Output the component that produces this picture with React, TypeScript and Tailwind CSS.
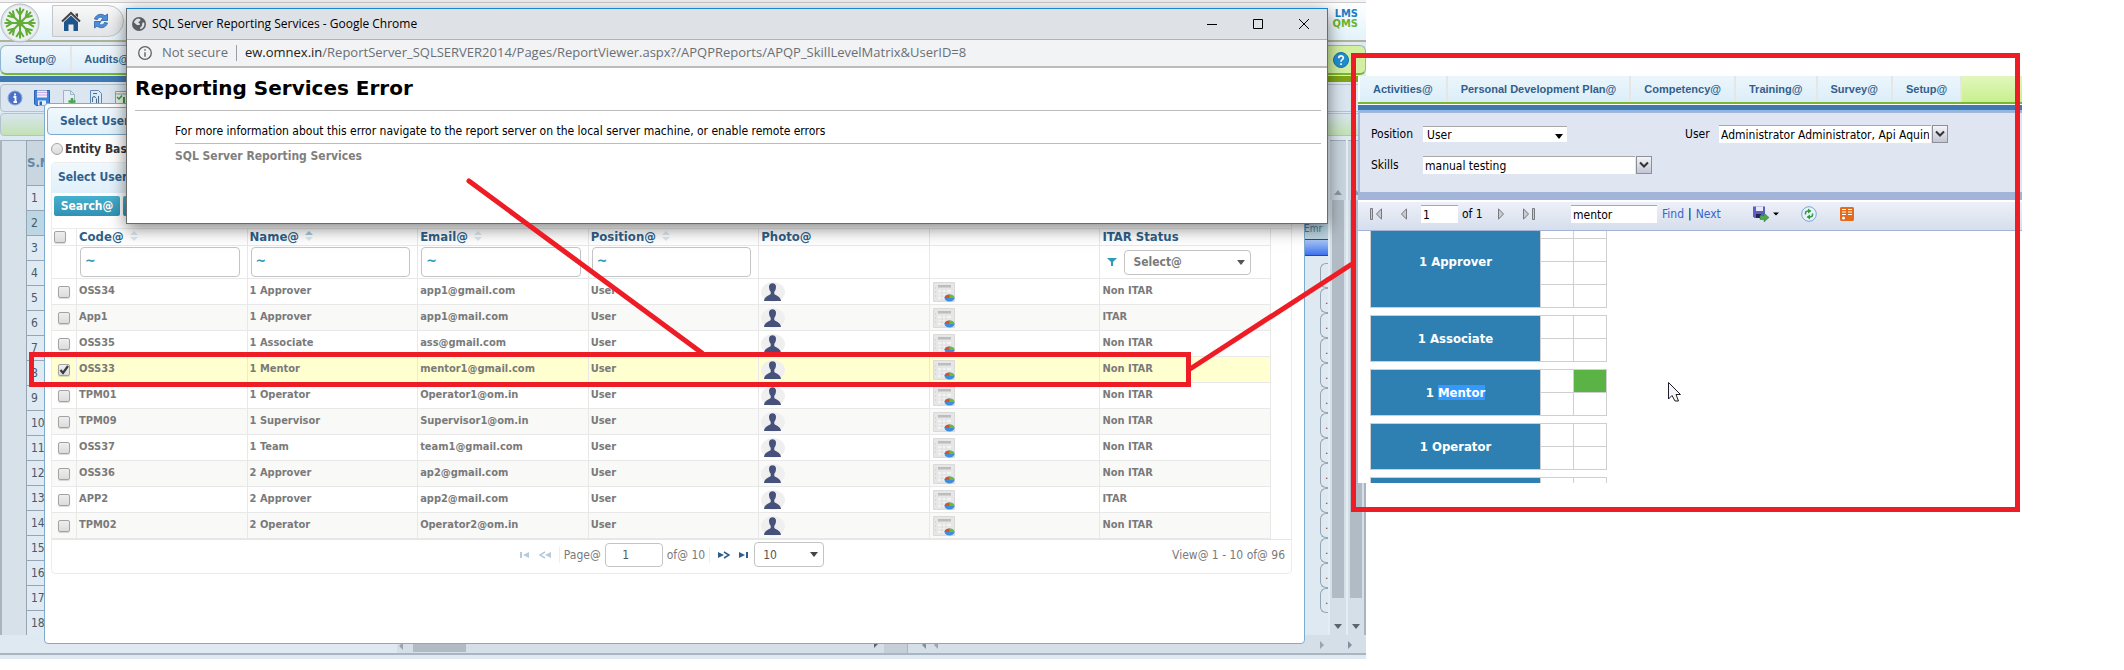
import React from "react";

const users = [
  { code: "OSS34", name: "1 Approver", email: "app1@gmail.com", itar: "Non ITAR" },
  { code: "App1", name: "1 Approver", email: "app1@mail.com", itar: "ITAR" },
  { code: "OSS35", name: "1 Associate", email: "ass@gmail.com", itar: "Non ITAR" },
  { code: "OSS33", name: "1 Mentor", email: "mentor1@gmail.com", itar: "Non ITAR" },
  { code: "TPM01", name: "1 Operator", email: "Operator1@om.in", itar: "Non ITAR" },
  { code: "TPM09", name: "1 Supervisor", email: "Supervisor1@om.in", itar: "Non ITAR" },
  { code: "OSS37", name: "1 Team", email: "team1@gmail.com", itar: "Non ITAR" },
  { code: "OSS36", name: "2 Approver", email: "ap2@gmail.com", itar: "Non ITAR" },
  { code: "APP2", name: "2 Approver", email: "app2@mail.com", itar: "ITAR" },
  { code: "TPM02", name: "2 Operator", email: "Operator2@om.in", itar: "Non ITAR" },
];

const gridRows = Array.from({ length: 18 }, (_, i) => i + 1);
const reportTabs = [
  "Activities@",
  "Personal Development Plan@",
  "Competency@",
  "Training@",
  "Survey@",
  "Setup@",
];

/* ---------- icons ---------- */

function BurstLogo() {
  const spokes = Array.from({ length: 8 }, (_, i) => i * 45);
  return (
    <svg viewBox="0 0 40 40" className="h-10 w-10 shrink-0">
      <circle cx="20" cy="20" r="19" fill="#dfe5e8" stroke="#b4bcc2" />
      <circle cx="20" cy="20" r="17" fill="#eef2f3" />
      <g stroke="#62ad38" strokeWidth="2" fill="none">
        {spokes.map((a) => (
          <path key={a} transform={`rotate(${a} 20 20)`} d="M20 20V4.500M16.200 6L20 12L23.800 6" />
        ))}
      </g>
      <circle cx="20" cy="20" r="3.500" fill="#62ad38" />
    </svg>
  );
}

function HomeIcon() {
  return (
    <svg viewBox="0 0 20 20" className="h-5 w-5">
      <path d="M1 10.500L10 2L19 10.500" fill="none" stroke="#444" strokeWidth="2" />
      <path d="M14.500 2.500h2.500v4l-2.500-2.300z" fill="#444" />
      <path d="M3 11L10 4.500L17 11V20H12.500V13.500H7.500V20H3Z" fill="#1d558c" />
    </svg>
  );
}

function SyncIcon() {
  return (
    <svg viewBox="0 0 16 16" className="h-4 w-4">
      <path d="M1.500 6C3 1 9 0 12 3L14.500 1V7.500H8L10 5C8 3.500 5 4 4.500 6.500Z" fill="#4d8fd8" stroke="#2a5ea8" strokeWidth="0.800" />
      <path d="M14.500 10C13 15 7 16 4 13L1.500 15V8.500H8L6 11C8 12.500 11 12 11.500 9.500Z" fill="#4d8fd8" stroke="#2a5ea8" strokeWidth="0.800" />
    </svg>
  );
}

function InfoIcon() {
  return (
    <svg viewBox="0 0 16 16" className="h-4 w-4">
      <circle cx="8" cy="8" r="7" fill="#4a6fc8" stroke="#8ba5dd" />
      <path d="M8 3.500v2M6.500 7H8.500V12M6.500 12H10" stroke="#fff" strokeWidth="1.800" fill="none" />
    </svg>
  );
}

function DiskIcon() {
  return (
    <svg viewBox="0 0 16 16" className="h-4 w-4">
      <path d="M0.500 0.500H15.500V15.500H2L0.500 14Z" fill="#3f86dc" stroke="#2c62b4" />
      <path d="M3 0.500H13V7.500H3Z" fill="#f3ecfb" />
      <path d="M3 2.500H13M3 5H13" stroke="#c9a9e6" />
      <path d="M4 10.500H12V15.500H4Z" fill="#e8f1fb" />
      <path d="M5.500 11.500H8V15H5.500Z" fill="#2c62b4" />
    </svg>
  );
}

function PageAddIcon() {
  return (
    <svg viewBox="0 0 16 16" className="h-4 w-4">
      <path d="M2.500 0.500H9.500L13.500 4.500V15.500H2.500Z" fill="#e3edf3" stroke="#9db4c4" />
      <path d="M9.500 0.500V4.500H13.500" fill="none" stroke="#9db4c4" />
      <path d="M11 8V15M7.500 11.500H14.500" stroke="#4aa84a" strokeWidth="2.500" />
    </svg>
  );
}

function PageLinkIcon() {
  return (
    <svg viewBox="0 0 16 16" className="h-4 w-4">
      <path d="M2.500 0.500H10.500L13.500 3.500V15.500H2.500Z" fill="#dbe9f5" stroke="#5a8bb8" />
      <path d="M5 3.500H9M4.500 12V8a1.500 1.500 0 0 1 3 0M10.500 6V14M8.500 8.500V14" stroke="#4b6d8e" fill="none" />
    </svg>
  );
}

function SheetCheckIcon() {
  return (
    <svg viewBox="0 0 16 16" className="h-4 w-4">
      <path d="M0.500 1.500H15.500V15.500H0.500Z" fill="#e6efe6" stroke="#8aa39a" />
      <path d="M0.500 4H15.500" stroke="#8aa39a" />
      <path d="M2 7L4 9L7 5.500" stroke="#3a9a3a" fill="none" strokeWidth="1.500" />
      <path d="M9 7V14M12 7V14" stroke="#3a9a3a" strokeWidth="2" />
    </svg>
  );
}

function HelpIcon() {
  return (
    <svg viewBox="0 0 16 16" className="h-4 w-4">
      <circle cx="8" cy="8" r="7.500" fill="#1f8fd0" stroke="#1472ac" />
      <path d="M5.700 6.300C5.700 3 10.400 3.200 10.300 6C10.200 7.800 8 7.600 8 9.700M8 11.300V13" stroke="#fff" strokeWidth="1.700" fill="none" />
    </svg>
  );
}

function GlobeIcon() {
  return (
    <svg viewBox="0 0 14 14" className="h-3.5 w-3.5 shrink-0">
      <circle cx="7" cy="7" r="7" fill="#5a5e63" />
      <path d="M6 1.500C8.500 1.500 9 3 8 4C6.500 4.500 6.500 5 6.500 6C8 6 8.500 7 7.500 8H5L2 5.500C2.500 3.500 4 2 6 1.500ZM11 5L12.500 6.500C12.500 9.500 11 11.500 8.500 12.200C7.500 11 8.500 10 9.500 9.500C10.500 8.500 9.500 6.500 11 5Z" fill="#dee1e6" />
    </svg>
  );
}

function PersonIcon() {
  return (
    <svg viewBox="0 0 24 20" className="block h-5 w-6">
      <ellipse cx="12" cy="10" rx="12" ry="10" fill="#efefef" />
      <path d="M8 4.500C8 0 15 0 15 4.500C15 7.500 14 9 13.300 9.800V12C14.500 13.500 19.500 14 20 19H3C3.500 14 8.500 13.500 9.700 12V9.800C9 9 8 7.500 8 4.500Z" fill="#46527b" />
    </svg>
  );
}

function ReportIcon() {
  return (
    <svg viewBox="0 0 22 20" className="block h-5 w-[22px]">
      <path d="M0.500 0.500H21.500V19.500H0.500Z" fill="#e6e6e6" stroke="#dadada" />
      <path d="M5 3H18V5.500H5Z" fill="#bdbdbd" />
      <path d="M5 8H18V17H5Z" fill="#f3f3f3" />
      <path d="M5 11H18M5 14H18M9 8V17M13 8V17" stroke="#dcdcdc" />
      <path d="M2 6h1M2 10h1M2 14h1" stroke="#c6c6c6" />
      <ellipse cx="16.500" cy="16" rx="5" ry="3.500" fill="#3f8ddb" />
      <path d="M16.500 16L11.500 16A5 3.500 0 0 1 16.500 12.500Z" fill="#d9502a" />
      <path d="M16.500 16V12.500A5 3.500 0 0 1 21.500 16Z" fill="#6cbf2c" />
    </svg>
  );
}

function SortIcon({ active }: { active?: boolean }) {
  return (
    <svg viewBox="0 0 8 10" className="ml-0.5 inline-block h-2.5 w-2 align-baseline">
      <path d="M0 4L4 0L8 4Z" fill={active ? "#a3c6de" : "#dbe8f0"} />
      <path d="M0 6L4 10L8 6Z" fill="#dbe8f0" />
    </svg>
  );
}

function Arrow({ dir, className }: { dir: "up" | "down" | "left" | "right"; className: string }) {
  const d = {
    up: "M0 7L4 2L8 7Z",
    down: "M0 2L4 7L8 2Z",
    left: "M6 0L2 4L6 8Z",
    right: "M2 0L6 4L2 8Z",
  }[dir];
  return (
    <svg viewBox="0 0 8 8" className={"h-2 w-2 " + className}>
      <path d={d} fill="currentColor" />
    </svg>
  );
}

/* step arrows of the report toolbar */
function StepIcon({ back, bar }: { back?: boolean; bar?: boolean }) {
  return (
    <svg viewBox={bar ? "0 0 12 12" : "0 0 6 12"} className={bar ? "h-3 w-3" : "h-3 w-1.5"}>
      <g transform={back ? (bar ? "matrix(-1 0 0 1 12 0)" : "matrix(-1 0 0 1 6 0)") : undefined}>
        <path d="M0.500 0.800L5.500 6L0.500 11.200Z" fill="#c9cbd0" stroke="#77797f" />
        {bar && <path d="M9.500 0.500H11.500V11.500H9.500Z" fill="#c9cbd0" stroke="#77797f" />}
      </g>
    </svg>
  );
}

/* ---------- application behind the dialogs ---------- */

function AppBackground() {
  return (
    <section className="flex h-full flex-col bg-[#dfe9f2]">
      <div className="h-0.5 bg-[#f3f3f3]" />
      <header className="flex h-10 justify-between border-t border-b-2 border-t-[#cccccc] border-b-[#b0b198] bg-gradient-to-b from-white to-[#e3f2fb]">
        <div className="flex">
          <BurstLogo />
          <div className="mt-0.5 ml-3 flex h-8 w-[72px] items-center gap-3 rounded-r-2xl border border-[#c3c7ca] bg-gradient-to-b from-[#f8f8f8] to-[#e2e4e6] pl-2">
            <button aria-label="Home">
              <HomeIcon />
            </button>
            <button aria-label="Refresh">
              <SyncIcon />
            </button>
          </div>
        </div>
        <div className="pt-1.5 pr-2 text-right text-[11px] leading-[10px] font-bold">
          <p className="text-[#1b7ec2]">LMS</p>
          <p className="text-[#6ab42d]">QMS</p>
        </div>
      </header>

      <nav className="mt-[3px] flex h-[30px] justify-between rounded-md border border-b-2 border-[#8fb5d5] border-b-[#76b833] bg-[#d3f0a0] font-['Liberation_Sans',sans-serif] text-[11px] font-bold text-[#335f8c]">
        <div className="flex">
          <a href="#setup" className="flex items-center rounded-l-md border-r-2 border-[#e6e6e6] bg-gradient-to-b from-[#f0f8fd] to-[#dcedf8] px-3.5">
            Setup@
          </a>
          <a href="#audits" className="flex items-center bg-gradient-to-b from-[#f0f8fd] to-[#dcedf8] px-3">
            Audits@
          </a>
        </div>
        <button aria-label="Help" className="mr-4">
          <HelpIcon />
        </button>
      </nav>
      <div className="mt-px flex h-1.5">
        <div className="flex-1 bg-[#4079b0]" />
        <div className="w-20 bg-[#7fa616]" />
      </div>

      <div className="mt-0.5 flex h-7 items-center gap-[11px] rounded border border-[#b4c2d0] bg-[#dbe6f0] pl-1.5">
        <InfoIcon />
        <DiskIcon />
        <PageAddIcon />
        <PageLinkIcon />
        <SheetCheckIcon />
      </div>
      <div className="mt-px h-[23px] rounded border border-[#b4c2d0] bg-gradient-to-b from-[#d8e5ee] to-[#c3e2b4]" />

      <div className="mt-1 flex border-x-2 border-[#aab4c0]">
        <div className="w-6 border-t border-[#a3b1bf] bg-[#d6e1e9]" />
        <div className="w-5 border-t border-l border-[#96a5b3] bg-[#dfeaf3] text-xs text-[#4a5a68]">
          <div className="flex h-11 items-center bg-[#c9d5df] text-[13px] font-bold text-[#6189aa]">S.No</div>
          {gridRows.map((n) => (
            <div
              key={n}
              className={
                "flex h-[25px] items-center border-t border-[#96a5b3] " +
                (n === 2 ? "bg-[#bdd6e3] " : "") +
                "pl-1"
              }
            >
              {n}
            </div>
          ))}
        </div>
        <div className="flex-1" />

        {/* cells left visible between the dialog and the scrollbars */}
        <div className="w-6 border-t border-[#a3b1bf]">
          <div className="h-[78px] bg-[#c9d8e4]" />
          <p className="h-5 bg-[#bdd5e2] text-[10px] leading-5 whitespace-nowrap text-[#527b9c]">Emr</p>
          <div className="h-[17px] border-y border-[#1f3fe0] bg-gradient-to-b from-[#a9c6f5] to-[#3f70ec]" />
          <div className="h-[7px]" />
          {gridRows.slice(4).map((n) => (
            <div key={n} className="ml-4 flex h-[25px] items-center justify-end rounded-l-md border border-r-0 border-[#96a5b3] text-[10px] text-[#333]">
              .
            </div>
          ))}
        </div>
        {[0, 1].map((n) => (
          <div key={n} className="flex w-[18px] flex-col border-l-2 border-[#e4edf4] bg-[#d4dfe8]">
            <div className="flex h-[60px] items-end justify-center border-t border-[#a3b1bf] bg-[#c9d5df] pb-1">
              <Arrow dir="up" className="text-[#8b97a3]" />
            </div>
            <div className="mx-0.5 h-[398px] bg-[#b0bbc5]" />
            <Arrow dir="down" className="mt-6 self-center text-[#5a6571]" />
          </div>
        ))}
      </div>

      <div className="flex flex-1 items-center border-b-2 border-[#a9b5c0] bg-[#dfe9f2]">
        <div className="w-[397px]" />
        <div className="flex h-full flex-1 items-center bg-[#d5dfe8]">
          <Arrow dir="left" className="mt-1 text-[#9aa5b0]" />
          <div className="ml-2 h-4 w-[53px] bg-[#b2bbc4]" />
          <Arrow dir="right" className="mr-1 ml-auto text-[#5a6571]" />
        </div>
        <div className="h-full w-6 border-r border-[#a9b5c0] bg-[#c5cfd9]" />
        <div className="flex h-full w-[458px] items-center bg-[#d5dfe8] pt-0.5 pr-3 pl-3">
          <Arrow dir="left" className="text-[#8090a6]" />
          <Arrow dir="left" className="ml-1 text-[#9aa5b0]" />
          <Arrow dir="right" className="mr-5 ml-auto text-[#9aa5b0]" />
          <Arrow dir="right" className="text-[#8090a6]" />
        </div>
      </div>
      <div className="h-1 bg-[#dfe9f2]" />
    </section>
  );
}

/* ---------- user picker ---------- */

function Tick({ label, checked }: { label: string; checked?: boolean }) {
  return (
    <span className="relative block h-3 w-3">
      <input
        type="checkbox"
        aria-label={label}
        defaultChecked={checked}
        className="peer block h-3 w-3 appearance-none rounded-xs border border-[#a3a3a3] bg-gradient-to-b from-[#eeeeee] to-[#dcdcdc] shadow-[0_1px_1px_rgba(0,0,0,0.15)]"
      />
      <svg viewBox="0 0 12 12" className="pointer-events-none absolute inset-0 hidden peer-checked:block">
        <path d="M2.500 6L5 9L10 2" fill="none" stroke="#3a3a3a" strokeWidth="2.200" />
      </svg>
    </span>
  );
}

function FilterInput({ label }: { label: string }) {
  return (
    <input
      aria-label={label}
      defaultValue="~"
      className="block h-[30px] w-full rounded border border-[#c4c4c4] bg-white px-1 pb-1 text-sm font-bold text-[#2f9ab8]"
    />
  );
}

function UserDialog() {
  return (
    <section className="absolute top-[103px] right-[61px] left-11 rounded border border-[#7fabcf] bg-white px-0.5 pt-[3px] pb-[69px]">
      <h2 className="h-7 rounded border border-[#7fabcf] bg-gradient-to-b from-[#f0f8fd] to-[#e0f0fa] px-3 text-xs leading-[27px] font-bold text-[#31618e]">
        Select User
      </h2>
      <div className="ml-1 flex h-[27px] items-center">
        <input
          id="entity"
          type="radio"
          className="h-3 w-3 appearance-none rounded-full border border-[#a3a3a3] bg-gradient-to-b from-[#eeeeee] to-[#dcdcdc]"
        />
        <label htmlFor="entity" className="ml-0.5 text-xs font-bold text-[#333]">
          Entity Based
        </label>
      </div>

      <div className="mr-2.5 ml-1 rounded border border-[#ececec]">
        <h3 className="h-[30px] bg-gradient-to-b from-[#f0f8fd] to-[#e0f0fa] px-1.5 text-xs leading-[29px] font-bold text-[#31618e]">
          Select User
        </h3>
        <div className="flex h-9 gap-[3px] border-b border-[#ececec] pt-[3px] pl-0.5">
          <button className="h-5 w-[66px] rounded-xs bg-gradient-to-b from-[#47b0cf] to-[#2f92b4] text-xs font-bold text-white">
            Search@
          </button>
          <button className="h-5 w-[66px] rounded-xs bg-gradient-to-b from-[#47b0cf] to-[#2f92b4] text-xs font-bold text-white">
            Reset@
          </button>
        </div>

        <div className="border-b border-[#e6e6e6] pr-5">
          <table className="w-full table-fixed border-separate border-spacing-0 text-left text-[11px] text-[#7a7a7a] [&_td]:border-r [&_td]:border-b [&_td]:border-[#e8e8e8] [&_th]:border-r [&_th]:border-b [&_th]:border-[#e8e8e8]">
            <colgroup>
              <col className="w-[25px]" />
              <col />
              <col />
              <col />
              <col />
              <col />
              <col />
              <col />
            </colgroup>
            <thead>
              <tr className="h-[17px] text-[13px] leading-4 text-[#2d5f8b]">
                <th className="pl-0.5">
                  <Tick label="Select all" />
                </th>
                <th className="pl-0.5">Code@ <SortIcon /></th>
                <th className="pl-0.5">Name@ <SortIcon active /></th>
                <th className="pl-0.5">Email@ <SortIcon /></th>
                <th className="pl-0.5">Position@ <SortIcon /></th>
                <th className="pl-0.5">Photo@</th>
                <th aria-label="Report" />
                <th className="pl-0.5">ITAR Status</th>
              </tr>
              <tr className="h-[33px]">
                <td />
                <td className="pr-[7px] pl-[3px]"><FilterInput label="Filter code" /></td>
                <td className="pr-[7px] pl-[3px]"><FilterInput label="Filter name" /></td>
                <td className="pr-[7px] pl-[3px]"><FilterInput label="Filter email" /></td>
                <td className="pr-[7px] pl-[3px]"><FilterInput label="Filter position" /></td>
                <td />
                <td />
                <td>
                  <div className="flex items-center pl-[7px]">
                    <svg viewBox="0 0 10 8" className="mr-[7px] h-2 w-2.5">
                      <path d="M0 0H10L6 4V8H4V4Z" fill="#2f9ab8" />
                    </svg>
                    <div className="relative w-[127px]">
                      <select
                        aria-label="ITAR status filter"
                        className="block h-[25px] w-full appearance-none rounded border border-[#c4c4c4] bg-white pl-2 text-xs font-bold text-[#7a7a7a]"
                      >
                        <option>Select@</option>
                      </select>
                      <Arrow dir="down" className="pointer-events-none absolute top-2 right-1.5 text-[#555]" />
                    </div>
                  </div>
                </td>
              </tr>
            </thead>
            <tbody className="font-bold">
              {users.map((u, i) => (
                <tr
                  key={u.code}
                  className={
                    "h-[26px] " +
                    (u.code === "OSS33" ? "bg-[#ffffcf]" : i % 2 ? "bg-[#f9f9f8]" : "bg-white")
                  }
                >
                  <td className="pl-1.5">
                    <Tick label={"Select " + u.code} checked={u.code === "OSS33"} />
                  </td>
                  <td className="pl-0.5">{u.code}</td>
                  <td className="pl-0.5">{u.name}</td>
                  <td className="pl-0.5">{u.email}</td>
                  <td className="pl-0.5">User</td>
                  <td className="pl-0.5"><PersonIcon /></td>
                  <td className="pl-[3px]"><ReportIcon /></td>
                  <td className="pl-0.5">{u.itar}</td>
                </tr>
              ))}
            </tbody>
          </table>
        </div>

        {/* pager */}
        <div className="grid h-[33px] grid-cols-[1fr_auto_1fr] items-center pb-1 text-xs text-[#7a7a7a]">
          <span />
          <div className="flex items-center">
            <button aria-label="First page" className="mr-2">
              <svg viewBox="0 0 12 8" className="h-2 w-3 text-[#b5cbdb]">
                <path d="M1 1H3V7H1ZM10 1V7L4 4Z" fill="currentColor" />
              </svg>
            </button>
            <button aria-label="Previous page" className="mr-2">
              <svg viewBox="0 0 12 8" className="h-2 w-3 text-[#b5cbdb]">
                <path d="M6 1L1 4L6 7" fill="none" stroke="currentColor" strokeWidth="1.500" />
                <path d="M12 1V7L6 4Z" fill="currentColor" />
              </svg>
            </button>
            <label htmlFor="page" className="border-l border-[#eeeeee] pl-1">
              Page@
            </label>
            <input
              id="page"
              defaultValue="1"
              className="mx-1 h-6 w-[58px] rounded border border-[#c4c4c4] pr-4 text-center text-[#555]"
            />
            <span className="border-r border-[#eeeeee] pr-1">of@ 10</span>
            <button aria-label="Next page" className="ml-2">
              <svg viewBox="0 0 12 8" className="h-2 w-3 text-[#2d5f8b]">
                <path d="M0 1V7L6 4Z" fill="currentColor" />
                <path d="M6 1L11 4L6 7" fill="none" stroke="currentColor" strokeWidth="1.500" />
              </svg>
            </button>
            <button aria-label="Last page" className="mr-1 ml-2">
              <svg viewBox="0 0 12 8" className="h-2 w-3 text-[#2d5f8b]">
                <path d="M1 1V7L7 4ZM8 1H10V7H8Z" fill="currentColor" />
              </svg>
            </button>
            <div className="relative w-[70px]">
              <select
                aria-label="Rows per page"
                className="block h-[25px] w-full appearance-none rounded border border-[#c4c4c4] bg-white pl-2 text-[#555]"
              >
                <option>10</option>
              </select>
              <Arrow dir="down" className="pointer-events-none absolute top-2 right-1.5 text-[#444]" />
            </div>
          </div>
          <span className="pr-1.5 text-right">View@ 1 - 10 of@ 96</span>
        </div>
      </div>
    </section>
  );
}

/* ---------- popup browser window ---------- */

function ErrorWindow() {
  return (
    <section className="absolute top-2 right-[38px] left-[126px] border border-[#6b6b6b] border-t-[#1883d7] bg-white shadow-[0_4px_16px_rgba(0,0,0,0.5)]">
      <div className="flex h-[31px] items-center border-b border-[#b0b2b5] bg-[#dee1e6] pl-[5px] font-['Open_Sans',sans-serif] text-xs text-black">
        <GlobeIcon />
        <span className="ml-1.5 flex-1">SQL Server Reporting Services - Google Chrome</span>
        <button aria-label="Minimize" className="flex w-[46px] justify-center">
          <svg viewBox="0 0 10 10" className="h-2.5 w-2.5"><path d="M0 5.500H10" stroke="#000" /></svg>
        </button>
        <button aria-label="Maximize" className="flex w-[46px] justify-center">
          <svg viewBox="0 0 10 10" className="h-2.5 w-2.5"><path d="M0.500 0.500H9.500V9.500H0.500Z" fill="none" stroke="#000" /></svg>
        </button>
        <button aria-label="Close" className="flex w-[46px] justify-center">
          <svg viewBox="0 0 10 10" className="h-2.5 w-2.5"><path d="M0 0L10 10M10 0L0 10" stroke="#000" /></svg>
        </button>
      </div>
      <div className="flex h-7 items-center border-b-2 border-[#b9bbbd] bg-[#f1f3f4] pl-[11px] font-['Open_Sans',sans-serif] text-[13px] text-[#6b6f74]">
        <svg viewBox="0 0 14 14" className="h-3.5 w-3.5 shrink-0">
          <circle cx="7" cy="7" r="6.300" fill="none" stroke="#5f6368" strokeWidth="1.300" />
          <path d="M7 3.300V4.800M7 6.200V10.700" stroke="#5f6368" strokeWidth="1.400" />
        </svg>
        <span className="ml-2.5">Not secure</span>
        <span className="mx-2 h-4 w-px bg-[#9b9ea2]" />
        <span>
          <span className="text-[#222]">ew.omnex.in</span>
          /ReportServer_SQLSERVER2014/Pages/ReportViewer.aspx?/APQPReports/APQP_SkillLevelMatrix&amp;UserID=8
        </span>
      </div>
      <div className="h-[155px] pt-1.5 pr-1.5 pl-2 text-black">
        <h1 className="h-[37px] border-b border-[#bcbcbc] font-['DejaVu_Sans',sans-serif] text-xl leading-7 font-bold">
          Reporting Services Error
        </h1>
        <div className="ml-10">
          <p className="mt-3 h-[21px] border-b border-[#bcbcbc] text-xs leading-4">
            For more information about this error navigate to the report server on the local server machine, or enable remote errors
          </p>
          <p className="mt-1 text-xs leading-4 font-bold text-[#808080]">SQL Server Reporting Services</p>
        </div>
      </div>
    </section>
  );
}

/* ---------- skill matrix report ---------- */

function DropButton({ label }: { label: string }) {
  return (
    <button
      aria-label={label}
      className="ml-px flex h-[18px] w-4 items-center justify-center border border-[#8d8f99] bg-gradient-to-b from-[#f4f4f8] to-[#c3c6d4]"
    >
      <svg viewBox="0 0 10 8" className="h-2 w-2.5">
        <path d="M1 1.500L5 5.500L9 1.500" fill="none" stroke="#333" strokeWidth="2" />
      </svg>
    </button>
  );
}

function MatrixBlock({ name, rows, children, done }: { name: string; rows: number; children?: React.ReactNode; done?: boolean }) {
  const cell = "h-[23px] w-[33px] border border-[#cfcfcf]";
  return (
    <tbody>
      {Array.from({ length: rows }, (_, i) => (
        <tr key={name + i}>
          {i === 0 && (
            <th rowSpan={rows} className="w-[170px] border border-[#cfcfcf] bg-[#2e7fb2] text-white">
              {children}
            </th>
          )}
          <td className={cell} />
          <td className={cell + (done && i === 0 ? " bg-[#5bb245]" : "")} />
        </tr>
      ))}
      <tr>
        <td colSpan={3} className="h-2" />
      </tr>
    </tbody>
  );
}

function ReportPanel() {
  return (
    <section className="relative mt-[76px] mr-[102px] -ml-2 bg-white text-xs text-black">
      <nav className="flex h-7 border-b-2 border-[#76b833] bg-gradient-to-b from-[#e2f7bd] to-[#c8f08b] font-['Liberation_Sans',sans-serif] text-[11px] font-bold text-[#335f8c]">
        <div className="w-0.5 bg-white" />
        {reportTabs.map((t) => (
          <a
            key={t}
            href={"#" + t}
            className="flex items-center border-r-2 border-[#e6e6e6] bg-gradient-to-b from-[#ebf6fc] to-[#dcedf8] px-[13px] whitespace-nowrap"
          >
            {t}
          </a>
        ))}
      </nav>
      <div className="mt-px h-[7px] border-b-2 border-[#8fb8e8] bg-[#4079b0]" />

      <div className="grid h-20 grid-cols-[314px_1fr] content-start gap-y-[13px] border-t border-l-2 border-[#a3b5d9] bg-[#dfe6f2] pt-3 pl-[11px]">
        <div className="flex h-[18px] items-center">
          <label htmlFor="position" className="w-[52px]">Position</label>
          <div className="relative w-36">
            <select id="position" className="block h-4 w-full appearance-none border-t border-[#a8a8a8] bg-white pl-1 leading-4">
              <option>User</option>
            </select>
            <Arrow dir="down" className="pointer-events-none absolute top-1.5 right-1" />
          </div>
        </div>
        <div className="flex h-[18px] items-center">
          <label htmlFor="user" className="w-[34px]">User</label>
          <input
            id="user"
            defaultValue="Administrator Administrator, Api Aquino"
            className="h-[18px] w-[212px] border-t border-[#a8a8a8] bg-white px-0.5"
          />
          <DropButton label="Open user list" />
        </div>
        <div className="flex h-[18px] items-center">
          <label htmlFor="skills" className="w-[52px]">Skills</label>
          <input
            id="skills"
            defaultValue="manual testing"
            className="h-[18px] w-[212px] border-t border-[#a8a8a8] bg-white px-0.5"
          />
          <DropButton label="Open skill list" />
        </div>
      </div>
      <div className="h-2 bg-[#a2b4d8]" />

      <div className="flex h-[31px] items-center border-t-2 border-b border-t-white border-b-[#a2b4d8] bg-gradient-to-b from-[#edf0f8] to-[#d6deec] pb-1 pl-3">
        <button aria-label="First page"><StepIcon back bar /></button>
        <button aria-label="Previous page" className="ml-[19px]"><StepIcon back /></button>
        <input aria-label="Page number" defaultValue="1" className="ml-3.5 h-[18px] w-[37px] border-t border-[#a8a8a8] bg-white px-0.5" />
        <span className="w-[34px] pl-1 whitespace-nowrap">of 1</span>
        <button aria-label="Next page" className="ml-1.5"><StepIcon /></button>
        <button aria-label="Last page" className="ml-[19px]"><StepIcon bar /></button>
        <input aria-label="Find text" defaultValue="mentor" className="ml-9 h-[18px] w-[86px] border-t border-[#a8a8a8] bg-white px-0.5" />
        <a href="#find" className="ml-[5px] text-[#3366cc]">Find</a>
        <span className="mx-1">|</span>
        <a href="#next" className="text-[#3366cc]">Next</a>
        <button aria-label="Export" className="ml-8 flex items-center gap-1">
          <svg viewBox="0 0 16 16" className="h-4 w-4">
            <path d="M0 0.500H12V12H1.500L0 10.500Z" fill="#5a5fc0" />
            <path d="M3 0.500H10V5H3Z" fill="#e9e9f7" />
            <path d="M3 8H8V12H3Z" fill="#23244f" />
            <path d="M7 9.500H11V7L16 11.500L11 16V13.500H7Z" fill="#4ea653" stroke="#2b7a35" strokeWidth="0.500" />
          </svg>
          <svg viewBox="0 0 6 4" className="h-1 w-1.5">
            <path d="M0 0.500H6L3 3.500Z" fill="#000" />
          </svg>
        </button>
        <button aria-label="Refresh" className="ml-[22px]">
          <svg viewBox="0 0 16 16" className="h-4 w-4">
            <circle cx="8" cy="8" r="7.300" fill="#e8f2fb" stroke="#7aa7d4" />
            <path d="M4.500 8.500V7C4.500 5.500 5.500 5 7.500 5" fill="none" stroke="#2f9a3a" strokeWidth="1.500" />
            <path d="M7 2.500L10.500 5L7 7.500Z" fill="#2f9a3a" />
            <path d="M11.500 7.500V9C11.500 10.500 10.500 11 8.500 11" fill="none" stroke="#2f9a3a" strokeWidth="1.500" />
            <path d="M9 8.500L5.500 11L9 13.500Z" fill="#2f9a3a" />
          </svg>
        </button>
        <button aria-label="Data feed" className="ml-[23px]">
          <svg viewBox="0 0 14 14" className="h-3.5 w-3.5">
            <path d="M1 0H13L14 1V13L13 14H1L0 13V1Z" fill="#e06c1c" />
            <path d="M2 2.500H6M2 5H6M2 7.500H6M8 2.500H12M8 5H12M8 7.500H12" stroke="#fff" />
            <circle cx="3.500" cy="11" r="1.500" fill="#fff" />
          </svg>
        </button>
      </div>

      <div className="h-[252px] overflow-hidden pl-3">
        <table className="-mt-4 border-collapse text-[13px]">
          <MatrixBlock name="approver" rows={4}>1 Approver</MatrixBlock>
          <MatrixBlock name="associate" rows={2}>1 Associate</MatrixBlock>
          <MatrixBlock name="mentor" rows={2} done>
            1 <mark className="bg-[#3399ff] text-white">Mentor</mark>
          </MatrixBlock>
          <MatrixBlock name="operator" rows={2}>1 Operator</MatrixBlock>
          <MatrixBlock name="next" rows={2} />
        </table>
      </div>
    </section>
  );
}

/* ---------- red markup and the pointer ---------- */

function Markup() {
  return (
    <svg viewBox="0 0 2124 670" preserveAspectRatio="none" className="pointer-events-none absolute inset-0 h-full w-full">
      <g fill="none" stroke="#ee1c24" strokeWidth="5">
        <rect x="31.500" y="354.500" width="1157" height="30" />
        <rect x="1353.500" y="55.500" width="664" height="454" />
        <path d="M469 181L702 353" strokeLinecap="round" />
        <path d="M1190 369L1352 264" />
      </g>
      <path d="M1668.500 382.500V399L1672 395.500L1675 401H1678.500L1676 394.500H1680.500Z" fill="#f5f5f5" stroke="#1d1d2b" />
    </svg>
  );
}

export default function App() {
  return (
    <main className="relative min-h-[670px] bg-white font-['DejaVu_Sans_Condensed','DejaVu_Sans',sans-serif]">
      <div className="grid grid-cols-[1366fr_758fr] items-start">
        <div className="relative h-[659px] min-w-0">
          <AppBackground />
          <UserDialog />
          <ErrorWindow />
        </div>
        <ReportPanel />
      </div>
      <Markup />
    </main>
  );
}
